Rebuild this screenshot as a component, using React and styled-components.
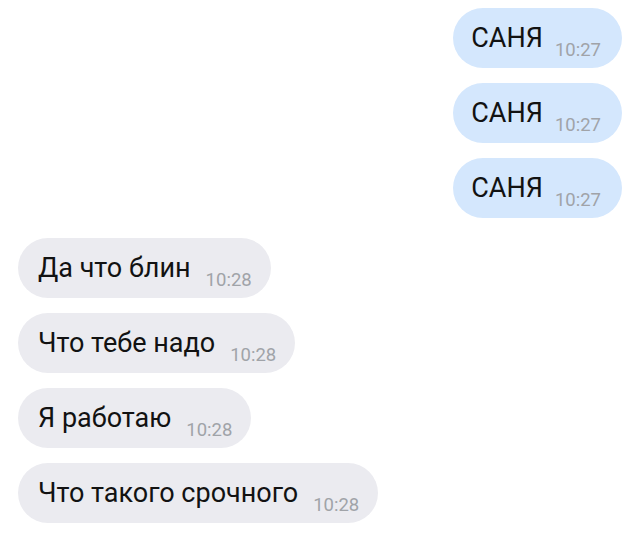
import React from "react";
import styled, { createGlobalStyle } from "styled-components";

const GlobalStyle = createGlobalStyle`
  html, body {
    margin: 0;
    padding: 0;
    background: #ffffff;
  }
  body {
    font-family: Roboto, "Noto Sans", sans-serif;
  }
`;

const groups = [
  {
    out: true,
    items: [
      { id: 1, text: "САНЯ", time: "10:27" },
      { id: 2, text: "САНЯ", time: "10:27" },
      { id: 3, text: "САНЯ", time: "10:27" },
    ],
  },
  {
    out: false,
    items: [
      { id: 4, text: "Да что блин", time: "10:28" },
      { id: 5, text: "Что тебе надо", time: "10:28" },
      { id: 6, text: "Я работаю", time: "10:28" },
      { id: 7, text: "Что такого срочного", time: "10:28" },
    ],
  },
];

const App = () => {
  return (
    <>
      <GlobalStyle />
      <StyledChat>
        {groups.map((g, i) => (
          <StyledGroup key={i} $out={g.out}>
            {g.items.map((m) => (
              <StyledBubble key={m.id} $out={g.out}>
                <span className="bubble_text">{m.text}</span>
                <span className="bubble_time">{m.time}</span>
              </StyledBubble>
            ))}
          </StyledGroup>
        ))}
      </StyledChat>
    </>
  );
};

export default App;

const StyledChat = styled.div`
  display: flex;
  flex-direction: column;
  gap: 20px;
  width: 640px;
  height: 536px;
  box-sizing: border-box;
  padding: 8px 18px 0 18px;
  overflow: hidden;
`;

const StyledGroup = styled.div`
  display: flex;
  flex-direction: column;
  align-items: ${({ $out }) => ($out ? "flex-end" : "flex-start")};
  gap: 15px;
`;

const StyledBubble = styled.div`
  display: flex;
  align-items: center;
  height: 60px;
  box-sizing: border-box;
  padding: 0 ${({ $out }) => ($out ? "21px" : "19px")} 0 ${({ $out }) => ($out ? "18px" : "20px")};
  gap: ${({ $out }) => ($out ? "12px" : "15px")};
  border-radius: 30px;
  background-color: ${({ $out }) => ($out ? "#d4e7fd" : "#ebebf0")};

  .bubble_text {
    font-size: 27px;
    line-height: 30px;
    color: #121212;
  }

  .bubble_time {
    font-size: 18.5px;
    line-height: 20px;
    color: #a0a3a8;
    padding-top: 23px;
  }
`;
